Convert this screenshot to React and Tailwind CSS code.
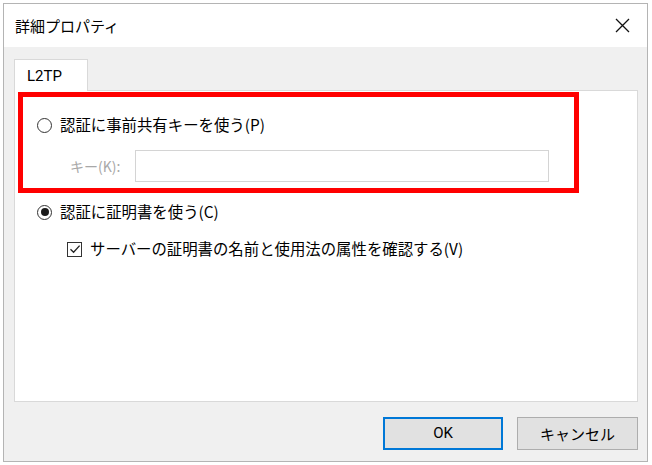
import React from "react";

const jp = { fontFamily: '"Noto Sans CJK JP", "Noto Sans", sans-serif' };

function Radio({ checked }) {
  return (
    <span className="relative flex h-[15px] w-[15px] shrink-0 items-center justify-center rounded-full border-[1.5px] border-[#333333] bg-white">
      {checked && <span className="h-[8px] w-[8px] rounded-full bg-[#1a1a1a]" />}
    </span>
  );
}

export default function App() {
  return (
    <div className="h-[465px] w-[652px] bg-white p-[3px]" style={jp}>
      <div className="flex h-[459px] w-[645px] flex-col border border-[#b4b4b4]">
        <div className="flex h-[43px] items-center justify-between bg-white pl-[11px] pr-[17px]">
          <span className="text-[15px] leading-none text-black">詳細プロパティ</span>
          <svg width="15" height="15" viewBox="0 0 15 15">
            <path d="M1 1L14 14M14 1L1 14" stroke="#111" strokeWidth="1.3" fill="none" />
          </svg>
        </div>
        <div className="flex flex-1 flex-col bg-[#f0f0f0] pl-[10px] pr-[9px] pt-[12px] pb-[10px]">
          <div className="flex">
            <div className="relative z-10 -mb-px flex h-[32px] w-[74px] items-center border border-b-0 border-[#d9d9d9] bg-white pl-[12px] pt-[2px]">
              <span className="text-[15px] leading-none text-black" style={{ fontFamily: 'Roboto, sans-serif' }}>L2TP</span>
            </div>
          </div>
          <div className="flex h-[312px] flex-col border border-[#d9d9d9] bg-white pt-px pl-[3px]">
            <div className="flex h-[101px] w-[561px] flex-col border-[5px] border-[#ff0000] pt-[18px] pl-[14px] pb-[6px]">
              <div className="flex h-[20px] items-center gap-[8px]">
                <Radio />
                <span className="text-[15.4px] leading-none text-black">認証に事前共有キーを使う(P)</span>
              </div>
              <div className="mt-[15px] flex items-center pl-[33px]">
                <span className="w-[65px] text-[14px] leading-none text-[#a8a8a8]">キー(K):</span>
                <div className="h-[32px] w-[414px] border border-[#d4d4d4] bg-white" />
              </div>
            </div>
            <div className="mt-[9px] flex h-[20px] items-center gap-[8px] pl-[19px]">
              <Radio checked />
              <span className="text-[15.4px] leading-none text-black">認証に証明書を使う(C)</span>
            </div>
            <div className="mt-[17px] flex h-[20px] items-center gap-[8px] pl-[49px]">
              <span className="flex h-[15px] w-[15px] shrink-0 items-center justify-center border border-[#333333] bg-white">
                <svg width="12" height="12" viewBox="0 0 12 12">
                  <path d="M1.5 6.2L4.6 9.3L10.6 2.6" stroke="#222" strokeWidth="1.3" fill="none" />
                </svg>
              </span>
              <span className="text-[15.4px] leading-none text-black">サーバーの証明書の名前と使用法の属性を確認する(V)</span>
            </div>
          </div>
          <div className="mt-[15px] flex justify-end gap-[14px] pr-[0px]">
            <button className="flex h-[33px] w-[120px] items-center justify-center border-2 border-[#0078d7] bg-[#e1e1e1] text-[15px] leading-none text-black" style={{ fontFamily: 'Roboto, sans-serif' }}>OK</button>
            <button className="flex h-[33px] w-[121px] items-center justify-center border border-[#adadad] bg-[#e1e1e1] text-[15px] leading-none text-black">キャンセル</button>
          </div>
        </div>
      </div>
    </div>
  );
}
